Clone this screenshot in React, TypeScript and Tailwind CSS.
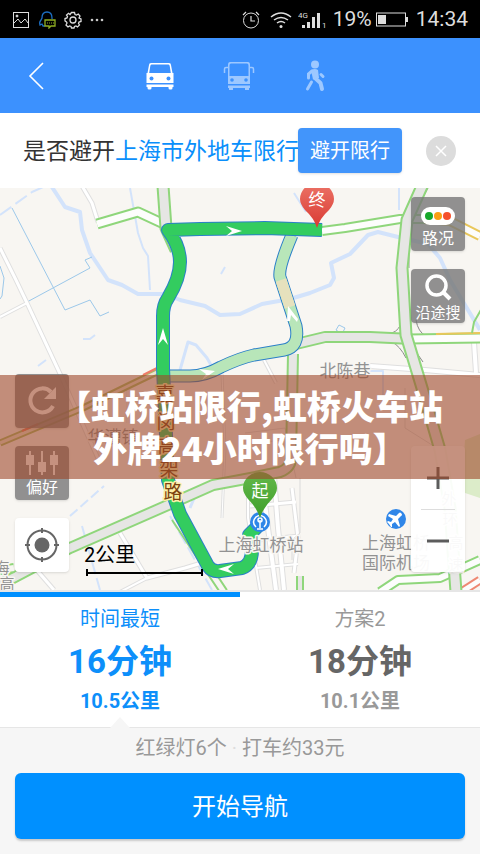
import clsx from 'clsx';
import type { ReactNode } from 'react';

type RoadProps = {
  d: string;
  width?: number;
  edge?: string;
  fill?: string;
  border?: number;
};

const Road = ({
  d,
  width = 12,
  edge = '#8fd67b',
  fill = '#e6e6e4',
  border = 2,
}: RoadProps) => (
  <g fill="none" strokeLinejoin="round">
    <path d={d} stroke={edge} strokeWidth={width} />
    <path d={d} stroke={fill} strokeWidth={width - border * 2} />
  </g>
);

type LabelProps = {
  x: number;
  y: number;
  size?: number;
  fill?: string;
  halo?: string;
  children: ReactNode;
};

const Label = ({
  x,
  y,
  size = 17,
  fill = '#929292',
  halo = '#f8f6f2',
  children,
}: LabelProps) => (
  <text
    x={x}
    y={y}
    fontSize={size}
    fill={fill}
    stroke={halo}
    strokeWidth={3}
    strokeLinejoin="round"
    paintOrder="stroke"
    textAnchor="middle"
    dominantBaseline="central"
  >
    {children}
  </text>
);

const water =
  'M50 -4 L65 19 L80 24 L82 42 L90 65 L108 92 L122 97 L138 106 L165 106 L180 112 L205 118 L220 127 L240 126 L262 116 L290 111 L310 105 L330 97 L334 90 L331 75 L350 66 L368 47 L378 44 L398 49 L428 56 L440 70 L450 92 L480 142';
const mainRoute =
  'M260 336 L249 347 L252 362 Q252 376 242 380 L220 383 Q212 384 208 378 L180 326 L168 292 L163 180 L163 128 Q163 117 168 110 Q180 90 180 74 Q180 58 168 42 L200 41 L265 40 L322 42';
const altRoute =
  'M292 47 Q278 80 280 89 L296 138 Q300 159 284 162 L254 167 Q240 170 221 179 Q205 188 190 188 L168 188';

const strips = [
  { d: 'M0 60 L15 90 L27 115 L62 190 L100 275', w: 5 },
  { d: 'M0 129 L27 115', w: 4 },
  { d: 'M82 -2 L92 15 L98 34', w: 5 },
  { d: 'M120 345 L147 390 L185 380 L205 374', w: 5 },
  { d: 'M147 390 L120 404', w: 4 },
  { d: 'M35 380 L54 402', w: 5 },
  { d: 'M370 178 L425 182 L480 187', w: 6 },
  { d: 'M222 186 L225 260 L222 330', w: 3 },
  { d: 'M128 200 L128 235', w: 3 },
  { d: 'M264 172 L276 195', w: 4 },
  { d: 'M474 154 L476 185', w: 6 },
  { d: 'M248 300 L248 330 L260 402', w: 4 },
  { d: 'M262 290 L268 340 L276 402', w: 6 },
  { d: 'M274 288 L278 340 L284 402', w: 6 },
  { d: 'M250 318 L296 314', w: 5 },
  { d: 'M258 352 L300 348', w: 5 },
  { d: 'M256 380 L298 376', w: 4 },
  { d: 'M292 300 L298 350 L294 385', w: 5 },
];

const MapCanvas = () => (
  <svg
    className="absolute inset-0 h-full w-full"
    viewBox="0 0 480 402"
    preserveAspectRatio="xMidYMid slice"
  >
    <rect width="480" height="402" fill="#f8f6f2" />
    <path d="M465 252 L480 246 L480 310 L462 304Z" fill="#dcecc9" />

    <g fill="none" stroke="#d3e3fb" strokeLinejoin="round">
      <path d={water} strokeWidth="4" />
      <path d="M130 0 L138 45 L143 60 L148 68 L150 102" strokeWidth="2" />
      <path d="M0 27 L32 4 L50 -4" strokeWidth="2" strokeDasharray="14 5" />
      <path d="M180 182 L188 154 L196 157 L207 170 L215 184" strokeWidth="3" />
      <path d="M83 151 L90 151 L95 147 M38 178 L46 172" strokeWidth="2" />
      <path d="M221 86 L225 79 M399 0 L399 22 M294 5 L306 24" strokeWidth="2" />
      <path d="M70 328 L104 298" strokeWidth="2" strokeDasharray="10 4" />
      <path d="M82 338 L100 402 M170 328 L212 402" strokeWidth="2" strokeDasharray="14 4" />
      <path d="M366 183 L383 183 L383 210" strokeWidth="2" />
      <path d="M188 302 L195 308 L190 320" strokeWidth="3" />
    </g>
    <g fill="none" stroke="#9cc8ea" strokeWidth="1">
      <path d="M12 20 L65 122 L90 112 L100 128 L109 124" />
      <path d="M27 114 L90 80 L85 72 L92 69" />
      <path d="M0 78 L4 90 L2 108 L0 111" />
      <path d="M336 142 L339 137 L345 140 L342 146Z" />
    </g>

    <g fill="none" strokeLinejoin="round">
      {strips.map(({ d, w }) => (
        <path key={d} d={d} stroke="#dfdfdf" strokeWidth={w} />
      ))}
      {strips.map(({ d, w }) => (
        <path key={d} d={d} stroke="#ffffff" strokeWidth={w - 2} />
      ))}
    </g>
    <g fill="none" stroke="#dadada">
      <path d="M405 200 L405 240 L440 262" />
      <path d="M245 245 L285 240 L296 290 M246 256 L282 252" />
      <path d="M300 290 L300 345 L292 352 L292 372" />
    </g>

    <Road d="M97 36 L138 24 L166 37" width={11} fill="#fdfdfc" />
    <Road d="M163 -2 L166 40 L176 62" width={13} />
    <Road d="M175 330 L208 380 L224 404" width={9} fill="#f8f6f2" />
    <Road
      d="M157 184 L130 197 L83 220 L0 255"
      width={7}
      edge="#a9bb6a"
      fill="#ece3d2"
    />
    <path d="M143 187 L157 180 M22 243 L38 236" stroke="#ee7c67" strokeWidth="2" />
    <Road d="M-4 399 L70 360 L168 317 L213 297 L240 292 L280 284 Q291 280 291 270 L293 166" />
    <Road d="M0 382 L14 380" width={10} fill="#f8f6f2" />
    <Road d="M300 402 L300 388" width={8} />
    <Road d="M380 404 L398 392 L440 390 L480 372" width={10} fill="#fdfdfc" />
    <Road d="M452 410 L480 392" width={9} edge="#ee8872" fill="#fdfdfc" />
    <path
      d="M392 145 Q400 142 402 132 M392 154 Q400 158 406 170 M416 132 Q418 144 426 148 M423 174 L412 158"
      stroke="#8a8a8a"
      fill="none"
    />
    <Road d="M322 43 L345 40 L400 31 L430 31" width={10} fill="#fdfdfc" />
    <Road
      d="M425 31 L450 33 L480 48"
      width={10}
      edge="#e9c75a"
      fill="#fdfdfc"
    />
    <Road d="M296 156 L325 149 L370 149 L412 151" width={12} />
    <Road d="M408 151 L480 150" width={11} fill="#fdfdfc" />
    <path d="M436 146 L480 145" stroke="#e9c75a" strokeWidth="2" />
    <path d="M472 145 L474 134 L482 120" stroke="#8fd67b" strokeWidth="2" fill="none" />
    <path d="M428 0 L409 36 L409 80" stroke="#9b9b9b" fill="none" />
    <Road d="M423 -4 L407 32 L402 80 L406 147 L422 200 L440 262 L450 320 L456 404" width={13} />

    <g fill="none" strokeLinejoin="round">
      <path d={altRoute} stroke="#2a7fc8" strokeWidth="13" />
      <path d={altRoute} stroke="#b8e6b9" strokeWidth="11" />
      <path d="M281 92 L290 119" stroke="#e6e1bd" strokeWidth="11" />
      <path d={mainRoute} stroke="#2a7fc8" strokeWidth="14" />
      <path d={mainRoute} stroke="#33cc5f" strokeWidth="12" />
    </g>
    <g fill="#ffffff">
      <path d="M226 38 L242 43 L226 48 L232 43Z" />
      <path d="M158 157 L163 140 L168 157 L163 151Z" />
      <path d="M234 376 L218 381 L234 386 L228 381Z" />
      <path d="M199 181 L215 183 L202 192 L206 186Z" />
      <path d="M287 133 L288 118 L298 131 L297 134 L291 127 L290 133Z" />
    </g>

    <Label x={345} y={183}>北陈巷</Label>
    <Label x={113} y={249}>华漕镇</Label>
    <Label x={261} y={357}>上海虹桥站</Label>
    <Label x={396} y={355}>上海虹桥</Label>
    <Label x={396} y={375}>国际机场</Label>
    <Label x={449} y={311} size={15}>外</Label>
    <Label x={450} y={332} size={15}>环</Label>
    <Label x={456} y={355} size={15}>高</Label>
    <Label x={456} y={377} size={15}>速</Label>
    <Label x={2} y={380} size={15}>海</Label>
    <Label x={7} y={396} size={15}>高</Label>
    <Label x={165} y={206} size={19} fill="#7b4310" halo="#fdf0a8">嘉</Label>
    <Label x={166} y={234} size={19} fill="#7b4310" halo="#fdf0a8">闵</Label>
    <Label x={167} y={258} size={19} fill="#7b4310" halo="#fdf0a8">高</Label>
    <Label x={169} y={281} size={19} fill="#7b4310" halo="#fdf0a8">架</Label>
    <Label x={173} y={304} size={19} fill="#7b4310" halo="#fdf0a8">路</Label>

    <circle cx="396" cy="331" r="10" fill="#2f86e8" />
    <path
      d="M401 325 Q403 327 401 328 L398 331 L400 338 L399 339 L395 334 L392 336 L392 339 L391 339 L389 336 L387 334 L388 333 L391 334 L393 331 L388 328 L389 326 L396 328 L399 325 Q400 324 401 325Z"
      fill="#ffffff"
    />

    <circle cx="260" cy="334" r="10" fill="#2f86e8" />
    <g fill="none" stroke="#ffffff" strokeWidth="1.5">
      <path d="M256 339 Q251 334 256 329 Q260 326 264 329 Q269 334 264 339" />
      <path d="M257 341 H263 M260 340 V332" />
      <circle cx="260" cy="332" r="2" />
    </g>

    <defs>
      <linearGradient id="pin-start" x2="0" y2="1">
        <stop offset="0" stopColor="#63b84a" />
        <stop offset="1" stopColor="#3f9f2a" />
      </linearGradient>
      <linearGradient id="pin-end" x2="0" y2="1">
        <stop offset="0" stopColor="#ec7367" />
        <stop offset="1" stopColor="#d93a32" />
      </linearGradient>
    </defs>
    <path
      d="M260 330 Q257 320 248 311 Q243 305 243 300 A17 16 0 0 1 277 300 Q277 305 272 311 Q263 320 260 330Z"
      fill="url(#pin-start)"
    />
    <path
      d="M317 40 Q314 30 305 22 Q300 16 300 11 A17 16 0 0 1 334 11 Q334 16 329 22 Q320 30 317 40Z"
      fill="url(#pin-end)"
    />
    <g fontSize="17" fill="#ffffff" textAnchor="middle" dominantBaseline="central">
      <text x="260" y="303">起</text>
      <text x="317" y="12">终</text>
    </g>
  </svg>
);

const StatusBar = () => (
  <div className="flex h-[38px] items-center bg-black px-3 pt-px text-[21px] text-[#dedede]">
    <div className="flex items-center gap-2">
      <svg width="18" height="18" viewBox="0 0 18 18" fill="none" stroke="#dedede">
        <rect x="1.5" y="1.5" width="15" height="15" />
        <path d="M2 12 L6 8 L9 12 L13 8 L16 12" />
        <circle cx="5" cy="5" r="1" fill="#dedede" />
      </svg>
      <svg width="18" height="18" viewBox="0 0 18 18" fill="none">
        <path
          d="M14 8 V7 Q14 1 9 1 Q4 1 4 7 L3 9 Q1 11 2 14 L4 13 L5 15 H7"
          stroke="#1c6fc4"
          strokeWidth="1.3"
        />
        <path d="M7 9 H17 V15 H13 L11 17 V15 H7Z" stroke="#8fae22" strokeWidth="1.3" />
        <path d="M9 12 H16" stroke="#8fae22" strokeDasharray="1 1" />
      </svg>
      <svg width="18" height="18" viewBox="0 0 18 18" fill="none" stroke="#dedede">
        <circle cx="9" cy="9" r="3" strokeWidth="1.3" />
        <path
          d="M7.5 1.5 H10.5 L11 3.5 L12.5 4 L14.3 3 L16 5 L15 7 L17 8 V10.5 L15 11 L14.5 12.5 L15.5 14 L13.5 16 L12 15 L10.5 15.5 L10 17 H7.5 L7 15.5 L5.5 15 L4 16 L2 14 L3 12 L2.5 11 L1 10 V7.5 L3 7 L3.5 5.5 L2.5 4 L4.5 2.3 L6 3.5Z"
          strokeWidth="1.3"
        />
      </svg>
      <svg width="14" height="18" viewBox="0 0 14 18" fill="#c8c8c8">
        <circle cx="2" cy="9" r="1.3" />
        <circle cx="7" cy="9" r="1.3" />
        <circle cx="12" cy="9" r="1.3" />
      </svg>
    </div>
    <div className="ml-auto flex items-center">
      <svg className="mr-2.5" width="18" height="18" viewBox="0 0 18 18" fill="none" stroke="#dedede">
        <circle cx="9" cy="9.5" r="7.5" />
        <path d="M9 5 V10 H13 M1 4 L4 1 M14 1 L17 4" strokeWidth="1.2" />
      </svg>
      <svg className="mr-1.5" width="22" height="18" viewBox="0 0 22 18" fill="none" stroke="#dedede">
        <path d="M1 6 Q11 -2 21 6 M4 9 Q11 4 18 9 M7 12 Q11 9 15 12" strokeWidth="1.5" />
        <circle cx="11" cy="15.5" r="1.5" fill="#dedede" stroke="none" />
      </svg>
      <svg className="mr-1.5" width="29" height="20" viewBox="0 0 29 20" fill="#dedede">
        <text x="0" y="8" fontSize="8">4G</text>
        <path d="M4 15 H7 V18 H4Z M9 12 H12 V18 H9Z M14 7 H17 V18 H14Z M19 3 H22 V18 H19Z" />
        <text x="24" y="18" fontSize="8">1</text>
      </svg>
      <span>19%</span>
      <svg className="mx-1" width="32" height="15" viewBox="0 0 32 15" fill="none">
        <rect x="0.5" y="1" width="29" height="13" stroke="#dedede" />
        <rect x="2" y="3" width="8" height="9" fill="#dedede" />
        <rect x="30" y="5" width="2" height="5" fill="#dedede" />
      </svg>
      <span className="ml-1">14:34</span>
    </div>
  </div>
);

const ModeBar = () => (
  <header className="flex h-[75px] items-center bg-[#3c91fe] px-6 text-white">
    <button type="button" aria-label="返回" className="flex w-6 justify-center">
      <svg width="16" height="28" viewBox="0 0 16 28" fill="none" stroke="#fff" strokeWidth="1.6">
        <path d="M15 1 L2 14 L15 27" />
      </svg>
    </button>
    <nav className="ml-[97px] flex items-center">
      <button type="button" aria-label="驾车">
        <svg width="30" height="30" viewBox="0 0 30 30" fill="#fff">
          <path
            fillRule="evenodd"
            d="M6 2 H24 Q26 2 26 4 L27.5 12 H28.5 V22 H1.5 V12 H2.5 L4 4 Q4 2 6 2Z M6.5 3.5 Q5.5 3.5 5.3 5 L4.2 12 H25.8 L24.7 5 Q24.5 3.5 23.5 3.5Z"
          />
          <path d="M1.5 23.5 H28.5 V26 H27.5 V27 Q27.5 28.5 26 28.5 H25 Q23.5 28.5 23.5 27 V26 H6.5 V27 Q6.5 28.5 5 28.5 H4 Q2.5 28.5 2.5 27 V26 H1.5Z" />
          <circle cx="6.5" cy="17.5" r="2" fill="#3c91fe" />
          <circle cx="23.5" cy="17.5" r="2" fill="#3c91fe" />
        </svg>
      </button>
      <button type="button" aria-label="公交" className="ml-12">
        <svg width="32" height="30" viewBox="0 0 32 30" fill="#9dc8ff">
          <path
            fillRule="evenodd"
            d="M7 1 H25 Q27 1 27 4 V23 H5 V4 Q5 1 7 1Z M8 2.5 Q6.5 2.5 6.5 4.5 V15 H25.5 V4.5 Q25.5 2.5 24 2.5Z"
          />
          <path d="M5 24.5 H27 V27 H26 V29 H22 V27 H10 V29 H6 V27 H5Z" />
          <path
            d="M5 6.5 H3 Q1.5 6.5 1.5 8 V12 M27 6.5 H29 Q30.5 6.5 30.5 8 V12"
            fill="none"
            stroke="#9dc8ff"
            strokeWidth="1.5"
          />
          <circle cx="9" cy="19" r="1.8" fill="#3c91fe" />
          <circle cx="23" cy="19" r="1.8" fill="#3c91fe" />
        </svg>
      </button>
      <button type="button" aria-label="步行" className="ml-12">
        <svg width="24" height="32" viewBox="0 0 24 32" fill="#9dc8ff">
          <circle cx="12" cy="4.5" r="4" />
          <path
            d="M12 12 L12 18 L17.500 23 L19 29"
            fill="none"
            stroke="#9dc8ff"
            strokeWidth="4"
            strokeLinecap="round"
            strokeLinejoin="round"
          />
          <path d="M8 10 Q12 8 15 10 L16 18 L10 19.5 Z" />
          <path
            d="M9 11 L5.5 14 V18 M8.5 22 L4.5 29 M18 14.5 L20 16.5"
            fill="none"
            stroke="#9dc8ff"
            strokeWidth="3"
            strokeLinecap="round"
          />
        </svg>
      </button>
    </nav>
  </header>
);

const Notice = () => (
  <div className="flex h-[75px] items-center bg-white pl-[23px] pr-6">
    <p className="min-w-0 flex-[0_1_275px] whitespace-nowrap pt-1 text-[23px] text-[#333]">
      是否避开
      <a href="#restriction" className="text-[#0a8ffb]">
        上海市外地车限行
      </a>
    </p>
    <button
      type="button"
      className="h-[45px] w-[104px] shrink-0 rounded bg-[#4295fb] text-xl text-white shadow-sm"
    >
      避开限行
    </button>
    <button
      type="button"
      aria-label="关闭"
      className="ml-auto flex size-[30px] shrink-0 items-center justify-center rounded-full bg-[#dcdcdc]"
    >
      <svg width="12" height="12" viewBox="0 0 12 12" stroke="#fff" strokeWidth="1.5">
        <path d="M1 1 L11 11 M11 1 L1 11" />
      </svg>
    </button>
  </div>
);

const mapButton =
  'flex size-[54px] flex-col items-center justify-end rounded bg-[#777]/80 text-white shadow leading-5 whitespace-nowrap';

const MapView = () => (
  <section className="relative min-h-[402px] flex-1 overflow-hidden">
    <MapCanvas />

    <div className="absolute right-[15px] top-[9px] flex flex-col gap-[18px]">
      <button type="button" className={clsx(mapButton, 'gap-1 pb-0.5 text-base leading-5')}>
        <span className="flex h-[18px] w-[34px] items-center justify-center gap-px rounded-full bg-white">
          <i className="size-2 rounded-full bg-[#17a82b]" />
          <i className="size-2 rounded-full bg-[#fb9f13]" />
          <i className="size-2 rounded-full bg-[#f5502c]" />
        </span>
        路况
      </button>
      <button type="button" className={clsx(mapButton, 'text-[15px]')}>
        <svg width="28" height="29" viewBox="0 0 28 29" fill="none" stroke="#fff">
          <circle cx="12.5" cy="11.500" r="9.500" strokeWidth="3.5" />
          <path d="M19 18 L26 25" strokeWidth="4" />
        </svg>
        沿途搜
      </button>
    </div>

    <div className="absolute bottom-[18px] left-[15px] flex items-end gap-[15px]">
      <div className="flex flex-col gap-[18px]">
        <button type="button" aria-label="刷新" className={mapButton}>
          <svg width="54" height="54" viewBox="0 0 54 54" fill="none" stroke="#fff">
            <path d="M38 32 A12 12 0 1 1 36 18" strokeWidth="4" />
            <path d="M41 13 V25 H29Z" fill="#fff" stroke="none" />
          </svg>
        </button>
        <button type="button" className={clsx(mapButton, 'gap-0.5 pb-0.5 text-base leading-5')}>
          <svg width="34" height="25" viewBox="0 0 34 25" fill="#fff">
            <path d="M4 0 H6 V24 H4Z M16 0 H18 V24 H16Z M28 0 H30 V24 H28Z" />
            <path d="M1 4 H9 V14 H1Z M13 11 H21 V21 H13Z M25 4 H33 V14 H25Z" />
          </svg>
          偏好
        </button>
        <button
          type="button"
          aria-label="定位"
          className="flex size-[54px] items-center justify-center rounded bg-white shadow"
        >
          <svg width="36" height="36" viewBox="0 0 36 36" fill="none" stroke="#666">
            <circle cx="18" cy="18" r="14.500" strokeWidth="2" />
            <circle cx="18" cy="18" r="7.500" fill="#666" stroke="none" />
            <path d="M18 1 V6 M18 30 V35 M1 18 H6 M30 18 H35" strokeWidth="2" />
          </svg>
        </button>
      </div>
      <div className="-mb-1 text-black">
        <p className="text-xl leading-5">2公里</p>
        <div className="ml-0.5 mt-1 flex h-[7px] w-[117px] items-center border-x-2 border-black">
          <div className="h-0.5 w-full bg-black" />
        </div>
      </div>
    </div>

    <div className="absolute bottom-[18px] right-[15px] flex w-[54px] flex-col items-center rounded bg-white/95 shadow">
      <button type="button" aria-label="放大" className="flex h-[63px] items-center">
        <svg width="22" height="22" viewBox="0 0 22 22" stroke="#5c5c5c" strokeWidth="3">
          <path d="M11 0 V22 M0 11 H22" />
        </svg>
      </button>
      <div className="h-px w-[34px] bg-[#ddd]" />
      <button type="button" aria-label="缩小" className="flex h-[62px] items-center">
        <svg width="22" height="22" viewBox="0 0 22 22" stroke="#5c5c5c" strokeWidth="3">
          <path d="M0 11 H22" />
        </svg>
      </button>
    </div>

    <h1 className="absolute inset-x-0 top-[187px] flex h-[104px] flex-col items-center justify-center bg-[#9f4829]/60 pl-5 text-[34px] font-black leading-[42px] text-white [font-family:'Noto_Sans_CJK_SC',sans-serif]">
      <span>【虹桥站限行,虹桥火车站</span>
      <span>外牌24小时限行吗】</span>
    </h1>
  </section>
);

const plans = [
  { name: '时间最短', time: '16分钟', distance: '10.5公里', active: true },
  { name: '方案2', time: '18分钟', distance: '10.1公里', active: false },
];

const Plans = () => (
  <div className="grid grid-cols-2 border-b border-t-2 border-[#e6e6e6] bg-white">
    {plans.map(({ name, time, distance, active }) => (
      <button
        key={name}
        type="button"
        className={clsx(
          'relative flex h-[135px] flex-col items-center border-t-[5px] pt-1.5',
          active
            ? 'border-[#0090ff] text-[#0d8ffa]'
            : 'border-transparent text-[#999]'
        )}
      >
        <span className="text-xl leading-8">{name}</span>
        <span
          className={clsx(
            'text-[33px] font-bold leading-[54px]',
            !active && 'text-[#666]'
          )}
        >
          {time}
        </span>
        <span className="text-xl font-bold leading-6">{distance}</span>
        {active && (
          <svg className="absolute -bottom-px" width="20" height="11" viewBox="0 0 20 11">
            <path d="M0 11 L10 0 L20 11Z" fill="#f6f6f6" />
          </svg>
        )}
      </button>
    ))}
  </div>
);

const App = () => (
  <main className="flex min-h-screen flex-col bg-[#f6f6f6] [font-family:Roboto,'Noto_Sans_CJK_SC',sans-serif]">
    <StatusBar />
    <ModeBar />
    <Notice />
    <MapView />
    <Plans />
    <div className="px-[15px] pb-[15px]">
      <p className="pb-2 pt-1 text-center text-xl leading-[33px] text-[#999]">
        红绿灯6个 <span className="text-[#ddd]">·</span> 打车约33元
      </p>
      <button
        type="button"
        className="h-[66px] w-full rounded-md bg-[#0090ff] pt-0.5 text-2xl text-white shadow-[0_2px_2px_#c9c9c9]"
      >
        开始导航
      </button>
    </div>
  </main>
);

export default App;
